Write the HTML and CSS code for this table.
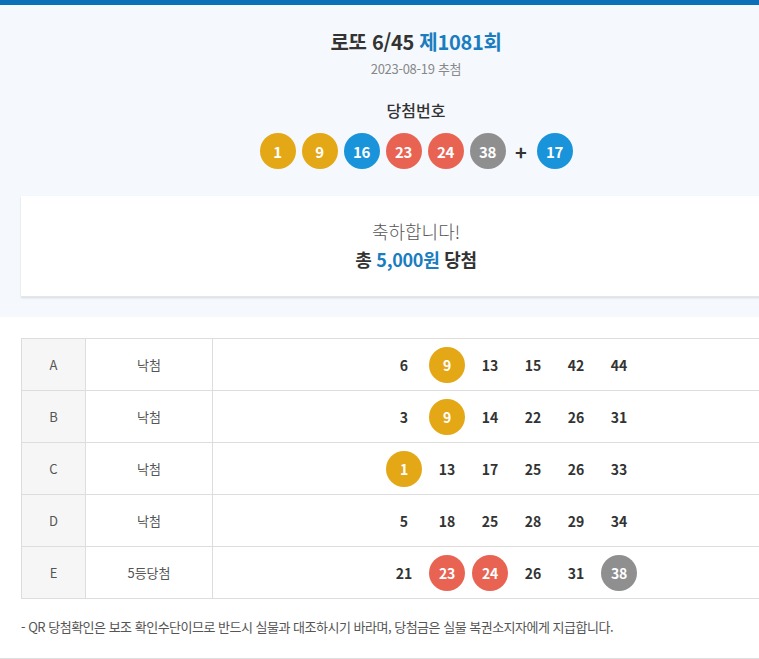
FILE: index.html
```html
<!DOCTYPE html>
<html lang="ko">
<head>
<meta charset="utf-8">
<title>로또 6/45 제1081회</title>
<link rel="stylesheet" href="styles.css">
</head>
<body>
<div class="page">
  <div class="topbar"></div>
  <section class="header">
    <h1 class="title">로또 6/45 <span class="round">제1081회</span></h1>
    <p class="date">2023-08-19 추첨</p>
    <h2 class="subtitle">당첨번호</h2>
    <div class="win-balls">
      <span class="ball clr1">1</span>
      <span class="ball clr1">9</span>
      <span class="ball clr2">16</span>
      <span class="ball clr3">23</span>
      <span class="ball clr3">24</span>
      <span class="ball clr4">38</span>
      <span class="plus">+</span>
      <span class="ball clr2">17</span>
    </div>
    <div class="card">
      <p class="congrats">축하합니다!</p>
      <p class="prize">총 <span class="amount">5,000원</span> 당첨</p>
    </div>
  </section>
  <section class="results">
    <table class="tbl">
      <tr>
        <td class="c-key">A</td>
        <td class="c-res">낙첨</td>
        <td class="c-nums"><div class="nums"><span class="n">6</span><span class="n ball clr1">9</span><span class="n">13</span><span class="n">15</span><span class="n">42</span><span class="n">44</span></div></td>
      </tr>
      <tr>
        <td class="c-key">B</td>
        <td class="c-res">낙첨</td>
        <td class="c-nums"><div class="nums"><span class="n">3</span><span class="n ball clr1">9</span><span class="n">14</span><span class="n">22</span><span class="n">26</span><span class="n">31</span></div></td>
      </tr>
      <tr>
        <td class="c-key">C</td>
        <td class="c-res">낙첨</td>
        <td class="c-nums"><div class="nums"><span class="n ball clr1">1</span><span class="n">13</span><span class="n">17</span><span class="n">25</span><span class="n">26</span><span class="n">33</span></div></td>
      </tr>
      <tr>
        <td class="c-key">D</td>
        <td class="c-res">낙첨</td>
        <td class="c-nums"><div class="nums"><span class="n">5</span><span class="n">18</span><span class="n">25</span><span class="n">28</span><span class="n">29</span><span class="n">34</span></div></td>
      </tr>
      <tr>
        <td class="c-key">E</td>
        <td class="c-res">5등당첨</td>
        <td class="c-nums"><div class="nums"><span class="n">21</span><span class="n ball clr3">23</span><span class="n ball clr3">24</span><span class="n">26</span><span class="n">31</span><span class="n ball clr4">38</span></div></td>
      </tr>
    </table>
    <p class="note">- QR 당첨확인은 보조 확인수단이므로 반드시 실물과 대조하시기 바라며, 당첨금은 실물 복권소지자에게 지급합니다.</p>
  </section>
</div>
</body>
</html>
```
FILE: styles.css
```css
html, body {
  margin: 0;
  padding: 0;
  overflow: hidden;
  background: #fff;
}
body {
  font-family: "Noto Sans CJK KR", "Noto Sans", sans-serif;
  color: #333;
}
.page {
  width: 832px;
}
.topbar {
  height: 5px;
  background: #0b70b8;
}
.header {
  background: #f5f9fd;
  padding: 23px 21px 20px;
  text-align: center;
}
.title {
  margin: 0;
  font-size: 20px;
  line-height: 28px;
  font-weight: 700;
  color: #333;
  letter-spacing: -0.3px;
}
.round {
  color: #1a7dbf;
}
.date {
  margin: 3px 0 0;
  font-size: 13px;
  line-height: 20px;
  color: #888;
  letter-spacing: -0.3px;
}
.subtitle {
  margin: 19px 0 0;
  font-size: 16px;
  line-height: 24px;
  font-weight: 500;
  color: #333;
}
.win-balls {
  margin-top: 11px;
  display: flex;
  justify-content: center;
  align-items: center;
  gap: 6px;
}
.ball {
  width: 36px;
  height: 36px;
  border-radius: 50%;
  display: flex;
  align-items: center;
  justify-content: center;
  color: #fff;
  font-size: 15px;
  font-weight: 700;
  letter-spacing: -0.3px;
}
.clr1 { background: #e4a716; }
.clr2 { background: #1993da; }
.clr3 { background: #e96353; }
.clr4 { background: #8f8f8f; }
.plus {
  width: 19px;
  text-align: center;
  font-size: 20px;
  font-weight: 700;
  color: #333;
}
.card {
  margin-top: 27px;
  background: #fff;
  padding: 22px 0 24px;
  box-shadow: 0 1px 2px rgba(0, 0, 0, 0.12);
  border-bottom: 1px solid #e3e6ea;
}
.congrats {
  margin: 0;
  font-size: 18px;
  line-height: 26px;
  font-weight: 300;
  color: #555;
}
.prize {
  margin: 2px 0 0;
  font-size: 18px;
  line-height: 26px;
  font-weight: 700;
  color: #333;
  letter-spacing: -0.3px;
}
.amount {
  color: #1a7dbf;
}
.results {
  padding: 21px 21px 21px;
  border-bottom: 1px solid #ddd;
}
.tbl {
  width: 790px;
  border-collapse: collapse;
  table-layout: fixed;
}
.tbl td {
  border: 1px solid #ddd;
  height: 51px;
  padding: 0;
  text-align: center;
  font-size: 13px;
  color: #555;
}
.c-key {
  width: 63px;
  background: #f6f6f6;
}
.c-res {
  width: 126px;
}
.nums {
  display: flex;
  justify-content: center;
  align-items: center;
  gap: 7px;
}
.n {
  width: 36px;
  height: 36px;
  display: flex;
  align-items: center;
  justify-content: center;
  font-size: 14px;
  font-weight: 700;
  color: #333;
}
.n.ball {
  color: #fff;
  font-size: 14px;
}
.note {
  margin: 18px 0 0;
  font-size: 13px;
  line-height: 20px;
  color: #555;
  letter-spacing: -0.5px;
}
```
